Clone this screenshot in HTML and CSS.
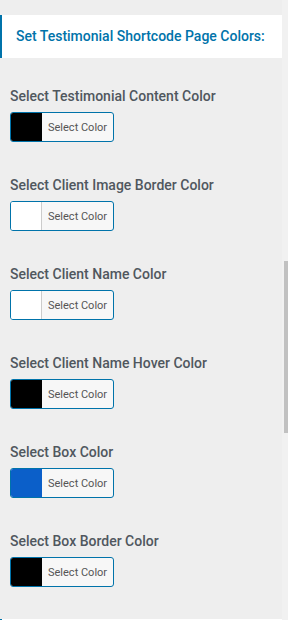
FILE: index.html
```html
<!DOCTYPE html>
<html>
<head>
<meta charset="utf-8">
<link rel="stylesheet" href="styles.css">
</head>
<body>
<div class="page">
  <div class="content">
    <div class="header">Set Testimonial Shortcode Page Colors:</div>
    <div class="fields">
      <div class="field">
        <div class="label">Select Testimonial Content Color</div>
        <button class="picker"><span class="swatch black"></span><span class="ptext">Select Color</span></button>
      </div>
      <div class="field">
        <div class="label">Select Client Image Border Color</div>
        <button class="picker"><span class="swatch white"></span><span class="ptext">Select Color</span></button>
      </div>
      <div class="field">
        <div class="label">Select Client Name Color</div>
        <button class="picker"><span class="swatch white"></span><span class="ptext">Select Color</span></button>
      </div>
      <div class="field">
        <div class="label">Select Client Name Hover Color</div>
        <button class="picker"><span class="swatch black"></span><span class="ptext">Select Color</span></button>
      </div>
      <div class="field">
        <div class="label">Select Box Color</div>
        <button class="picker"><span class="swatch blue"></span><span class="ptext">Select Color</span></button>
      </div>
      <div class="field">
        <div class="label">Select Box Border Color</div>
        <button class="picker"><span class="swatch black"></span><span class="ptext">Select Color</span></button>
      </div>
    </div>
    <div class="header next"></div>
  </div>
  <div class="scrollbar"><div class="thumb"></div></div>
</div>
</body>
</html>
```
FILE: styles.css
```css
* { box-sizing: border-box; }
html, body { margin: 0; padding: 0; }
body {
  background: #eeeeee;
  font-family: Roboto, "Liberation Sans", sans-serif;
  height: 620px;
  overflow: hidden;
}
.page {
  display: flex;
  height: 620px;
}
.content {
  width: 282px;
  flex: none;
  height: 620px;
  overflow: hidden;
}
.header {
  margin-top: 15px;
  height: 43px;
  background: #ffffff;
  border-left: 2px solid #0073aa;
  padding-left: 14px;
  line-height: 43px;
  font-size: 14px;
  font-weight: 500;
  color: #0073aa;
  white-space: nowrap;
}
.header.next {
  margin-top: 32px;
}
.fields {
  padding: 28px 10px 0;
  display: flex;
  flex-direction: column;
  gap: 33px;
}
.field {
  display: flex;
  flex-direction: column;
  align-items: flex-start;
  gap: 6px;
}
.label {
  font-size: 14px;
  line-height: 20px;
  font-weight: 500;
  color: #50575e;
  white-space: nowrap;
}
.picker {
  display: flex;
  align-items: stretch;
  height: 30px;
  width: 104px;
  padding: 0;
  border: 1px solid #0073aa;
  border-radius: 3px;
  background: #f7f7f7;
  overflow: hidden;
  font-family: inherit;
}
.swatch {
  width: 31px;
  flex: none;
  border-right: 1px solid #cccccc;
}
.swatch.black { background: #000000; border-right-color: #000000; }
.swatch.white { background: #ffffff; }
.swatch.blue { background: #0b5fc9; border-right-color: #0b5fc9; }
.ptext {
  flex: 1;
  display: flex;
  align-items: center;
  padding-left: 6px;
  font-size: 11px;
  color: #555555;
  white-space: nowrap;
}
.scrollbar {
  width: 6px;
  flex: none;
  background: #f1f1f1;
  position: relative;
}
.thumb {
  position: absolute;
  left: 2px;
  right: 0;
  top: 261px;
  height: 172px;
  background: #c1c1c1;
}
```
